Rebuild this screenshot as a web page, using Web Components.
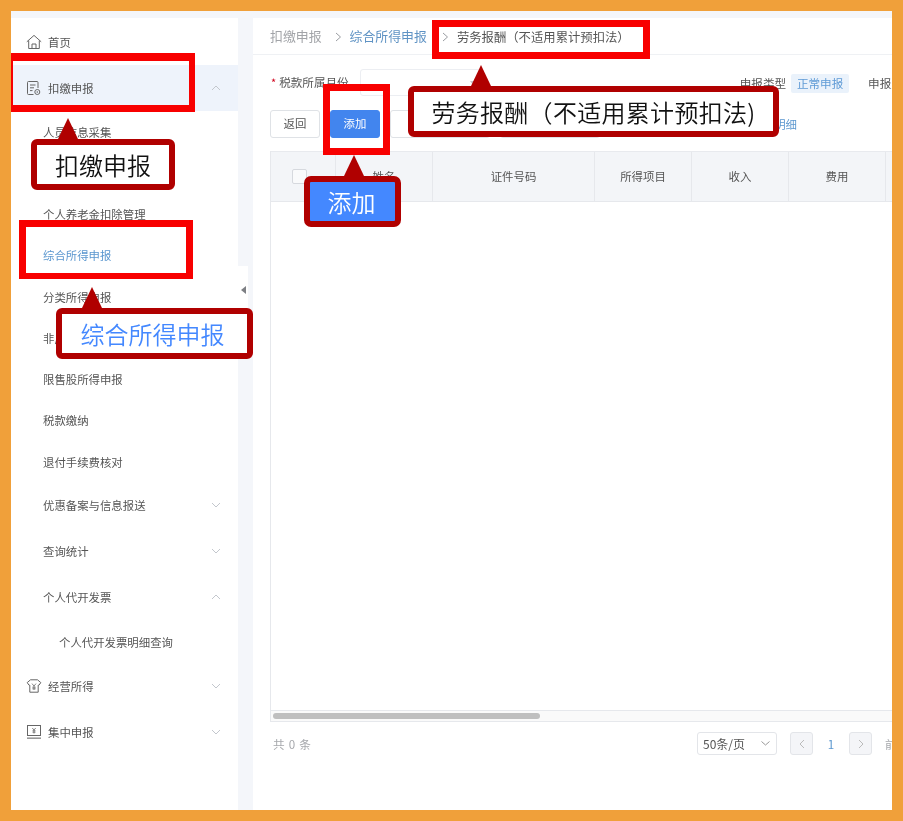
<!DOCTYPE html>
<html lang="zh-CN">
<head>
<meta charset="utf-8">
<title>劳务报酬</title>
<style>
html,body{margin:0;padding:0;background:#f0a03a;}
body{width:903px;height:821px;overflow:hidden;font-family:"Noto Sans CJK SC","Liberation Sans",sans-serif;}
</style>
</head>
<body>
<x-frame>
  <x-sidebar slot="side">
    <x-nav label="首页" icon="home" h="46"></x-nav>
    <x-nav label="扣缴申报" icon="doc" chev="up" h="46" current></x-nav>
    <x-nav label="人员信息采集" sub></x-nav>
    <x-nav label="专项附加扣除信息采集" sub></x-nav>
    <x-nav label="个人养老金扣除管理" sub></x-nav>
    <x-nav label="综合所得申报" sub active></x-nav>
    <x-nav label="分类所得申报" sub></x-nav>
    <x-nav label="非居民所得申报" sub></x-nav>
    <x-nav label="限售股所得申报" sub></x-nav>
    <x-nav label="税款缴纳" sub></x-nav>
    <x-nav label="退付手续费核对" sub></x-nav>
    <x-nav label="优惠备案与信息报送" sub chev="down" h="46"></x-nav>
    <x-nav label="查询统计" sub chev="down" h="46"></x-nav>
    <x-nav label="个人代开发票" sub chev="up" h="46"></x-nav>
    <x-nav label="个人代开发票明细查询" deep h="43"></x-nav>
    <x-nav label="经营所得" icon="shirt" chev="down" h="46"></x-nav>
    <x-nav label="集中申报" icon="screen" chev="down" h="46"></x-nav>
  </x-sidebar>
  <x-main slot="main">
    <x-crumbs></x-crumbs>
    <x-filter></x-filter>
    <x-actions></x-actions>
    <x-grid></x-grid>
    <x-pager></x-pager>
  </x-main>
  <x-mark slot="over" style="left:11px;top:53px;width:184px;height:59px;border-width:8px 6px 7px 2px"></x-mark>
  <x-mark slot="over" style="left:19px;top:220px;width:174px;height:59px;border-width:7px 7px 6px 7px"></x-mark>
  <x-mark slot="over" style="left:323px;top:84px;width:67px;height:71px;border-width:7px 7px 7px 7px"></x-mark>
  <x-mark slot="over" style="left:432px;top:20px;width:218px;height:39px;border-width:7px 7px 7px 7px"></x-mark>
  <x-tip slot="over" tip="21" style="left:31px;top:139px;width:144px;height:51px">扣缴申报</x-tip>
  <x-tip slot="over" tip="20" tone="link" style="left:56px;top:308px;width:197px;height:51px;padding-right:4px">综合所得申报</x-tip>
  <x-tip slot="over" tip="57" wide style="left:408px;top:86px;width:371px;height:51px">劳务报酬（不适用累计预扣法)</x-tip>
  <x-tip slot="over" tip="34" tone="fill" style="left:304px;top:176px;width:97px;height:51px;padding-right:2px">添加</x-tip>
</x-frame>

<script>
const ICONS={
 home:'<svg width="16" height="16" viewBox="0 0 16 16" fill="none" stroke="#666" stroke-width="1"><path d="M.8 7.800 8 1.400l7.200 6.400"/><path d="M2.700 6.500v8h10.600v-8"/><path d="M6 14.500v-4.500h4v4.500"/></svg>',
 doc:'<svg width="16" height="16" viewBox="0 0 16 16" fill="none" stroke="#666" stroke-width="1"><path d="M7.500 14.500H2.500a1 1 0 0 1-1-1V2.500a1 1 0 0 1 1-1h8.500a1 1 0 0 1 1 1V8"/><path d="M4 5h5.500M4 7.800h4M4 10.600h2.500"/><circle cx="11.300" cy="12" r="2.500"/><circle cx="11.300" cy="12" r=".8" fill="#666" stroke="none"/></svg>',
 shirt:'<svg width="16" height="16" viewBox="0 0 16 16" fill="none" stroke="#666" stroke-width="1"><path d="M4.500 1.800h7l3.300 2.800-1.800 2.600h-.8v7H3.800v-7H3L1.200 4.600z"/><path d="M6 5.600l2 2.400 2-2.400M8 8v4M6.300 9.200h3.400M6.300 10.800h3.400" stroke-width=".8"/></svg>',
 screen:'<svg width="16" height="16" viewBox="0 0 16 16" fill="none" stroke="#666" stroke-width="1"><rect x="1.500" y="1.500" width="13" height="10"/><path d="M1 14.200h14" stroke-width="1.600" stroke="#999"/><path d="M6.300 4l1.700 2 1.700-2M8 6v3.500M6.500 6.800h3M6.500 8.200h3" stroke-width=".8"/></svg>'
};
const CHEV={
 up:'<svg width="10" height="6" viewBox="0 0 10 6" fill="none" stroke="#c3c7cd" stroke-width="1"><path d="M1 5 5 1l4 4"/></svg>',
 down:'<svg width="10" height="6" viewBox="0 0 10 6" fill="none" stroke="#c3c7cd" stroke-width="1"><path d="M1 1l4 4 4-4"/></svg>'
};
function def(name,css,html,setup){
  customElements.define(name,class extends HTMLElement{
    constructor(){super();const r=this.attachShadow({mode:'open'});r.innerHTML='<style>'+css+'</style>'+html;}
    connectedCallback(){if(setup)setup.call(this,this.shadowRoot);}
  });
}

def('x-frame',`
  :host{display:block;width:903px;height:821px;box-sizing:border-box;padding:11px;position:relative;color:#555}
  .page{width:881px;height:799px;background:#f4f6fa;display:flex;align-items:stretch;padding-top:7px;box-sizing:border-box;overflow:hidden;filter:blur(.35px)}
  .gap{width:15px;flex:none;position:relative}
  .tab{position:absolute;left:0;top:248px;width:10px;height:92px;background:#fff;display:flex;align-items:flex-start;justify-content:flex-end;padding-top:20px;box-sizing:border-box;padding-right:2px}
  .tab i{width:0;height:0;border:4px solid transparent;border-right:5px solid #7d7f84;border-left:0}
  .side{flex:none;width:227px;display:block}
  .main{flex:1;min-width:0;display:block}
`,`<div class="page">
    <div class="side"><slot name="side"></slot></div>
    <div class="gap"><div class="tab"><i></i></div></div>
    <div class="main"><slot name="main"></slot></div>
  </div><slot name="over"></slot>`);

def('x-sidebar',`:host{display:block;height:792px;background:#fff;padding-top:1px;box-sizing:border-box}`,`<slot></slot>`);

def('x-nav',`
  :host{display:flex;align-items:center;box-sizing:border-box;height:41.25px;font-size:11.4px;color:#555;white-space:nowrap;padding-left:32px;padding-right:17px}
  :host([sub]){padding-left:32px}
  :host([deep]){padding-left:48px}
  :host([icon]){padding-left:15px}
  :host([current]){background:#eef3fb}
  :host([active]){color:#5b97cf}
  .ic{display:flex;width:16px;height:16px;margin-right:6px;flex:none}
  .ic:empty{display:none}
  .t{flex:1}
  .c{display:flex;flex:none}
`,`<span class="ic"></span><span class="t"></span><span class="c"></span>`,function(r){
  r.querySelector('.t').textContent=this.getAttribute('label');
  const h=this.getAttribute('h'); if(h)this.style.height=h+'px';
  const i=this.getAttribute('icon'); if(i)r.querySelector('.ic').innerHTML=ICONS[i];
  const c=this.getAttribute('chev'); if(c)r.querySelector('.c').innerHTML=CHEV[c];
});

def('x-main',`:host{display:block;height:792px;background:#fff;overflow:hidden;box-sizing:border-box}`,`<slot></slot>`);

def('x-crumbs',`
  :host{display:flex;align-items:center;height:37px;box-sizing:border-box;border-bottom:1.5px solid #eff1f4;padding-left:17px;font-size:12.9px;white-space:nowrap;color:#a2a4a8}
  .a{position:relative;top:-1px}
  .s{width:28px;display:flex;justify-content:center;flex:none;padding-left:5px;box-sizing:border-box;position:relative;top:1px}
  .s2{width:30px;padding-left:7px}
  .l{color:#5f93c4;position:relative;top:-1px}
  .c{color:#555;font-size:12.35px;position:relative;top:1px}
`,`<span class="a">扣缴申报</span><span class="s"><svg width="7" height="10" viewBox="0 0 7 10" fill="none" stroke="#9a9da2"><path d="M1 1l4.500 4L1 9"/></svg></span><span class="l">综合所得申报</span><span class="s s2"><svg width="7" height="10" viewBox="0 0 7 10" fill="none" stroke="#9a9da2"><path d="M1 1l4.500 4L1 9"/></svg></span><span class="c">劳务报酬（不适用累计预扣法）</span>`);

def('x-filter',`
  :host{display:flex;align-items:center;height:55px;box-sizing:border-box;padding-left:18px;font-size:11.6px;white-space:nowrap;color:#555;padding-top:1px}
  .r{color:#d0021b;margin-right:3px;font-size:11px;position:relative;top:-1px}
  .lab{position:relative;top:-1px}
  .in{width:124px;height:27px;box-sizing:border-box;border:1px solid #eceef2;border-radius:3px;margin-left:11px;margin-top:-1px;flex:none;display:flex;align-items:center;justify-content:flex-end;padding-right:7px}
  .in i{width:0;height:0;border:3px solid transparent;border-top:4px solid #c8cacf;margin-top:3px}
  .t1{margin-left:256px}
  .tag{margin-left:5px;width:58px;height:19px;background:#eaf2fb;color:#5f9bd6;display:flex;align-items:center;justify-content:center;border-radius:2px;flex:none}
  .t2{margin-left:19px}
`,`<span class="r">*</span><span class="lab">税款所属月份</span><span class="in"><i></i></span><span class="t1">申报类型</span><span class="tag">正常申报</span><span class="t2">申报类型</span>`);

def('x-actions',`
  :host{display:flex;align-items:center;height:28px;padding-left:17px;font-size:11.4px;white-space:nowrap;gap:10px;position:relative}
  .b{width:50px;height:28px;box-sizing:border-box;border:1px solid #dfe2e6;border-radius:3px;background:#fff;color:#555;display:flex;align-items:center;justify-content:center;flex:none;padding-bottom:2px}
  .p{background:#4285ee;border-color:#4285ee;color:#fff}
  .w{width:100px}
  .link{margin-left:auto;margin-right:95px;color:#5b97cf}
`,`<span class="b">返回</span><span class="b p">添加</span><span class="b w">导入</span><span class="b w">导出</span><span class="link">查看明细</span>`);

def('x-grid',`
  :host{display:block;margin:13px 0 0 17px;width:640px;height:571px;box-sizing:border-box;border-left:1px solid #e6e8ec;border-bottom:1px solid #e6e8ec;font-size:11.4px;color:#555;white-space:nowrap;overflow:hidden}
  .h{display:grid;grid-template-columns:65px 97px 162px 97px 97px 97px 97px;height:51px;background:#f3f5f8;border-top:1px solid #e8eaee;border-bottom:1px solid #e6e8ec;box-sizing:border-box}
  .h>span{display:flex;align-items:center;justify-content:center;border-right:1px solid #e6e8ec;padding-bottom:2px}
  .cb{width:13px;height:13px;border:1px solid #d6d9de;border-radius:2px;background:#f9fafb;position:relative;left:-4px;top:1px}
  .body{height:509px;border-bottom:1px solid #e6e8ec;box-sizing:border-box}
  .bar{height:10px;background:#fafafa;padding:2px;box-sizing:border-box;display:flex}
  .bar i{display:block;width:267px;height:6px;background:#bfbfbf;border-radius:3px}
`,`<div class="h"><span><i class="cb"></i></span><span>姓名</span><span>证件号码</span><span>所得项目</span><span>收入</span><span>费用</span><span></span></div><div class="body"></div><div class="bar"><i></i></div>`);

def('x-pager',`
  :host{display:flex;align-items:center;height:23px;margin-top:10px;padding-left:20px;font-size:11.6px;white-space:nowrap;color:#a6a8ac;position:relative}
  .tot{word-spacing:1.5px}
  .sel{margin-left:auto;width:80px;height:23px;box-sizing:border-box;border:1px solid #e3e5e9;border-radius:3px;color:#555;display:flex;align-items:center;justify-content:space-between;padding:0 6px 1px 5px;flex:none;font-size:12px}
  .n{width:23px;height:23px;box-sizing:border-box;border:1px solid #e3e5e9;border-radius:3px;background:#f4f5f8;display:flex;align-items:center;justify-content:center;flex:none}
  .prev{margin-left:13px}
  .one{width:36px;text-align:center;color:#5b97cf;flex:none}
  .go{margin-left:13px;margin-right:-22px;width:29px;flex:none}
`,`<span class="tot">共 0 条</span><span class="sel"><span>50条/页</span><svg width="9" height="5" viewBox="0 0 9 5" fill="none" stroke="#999"><path d="M.5.5l4 3.500 4-3.500"/></svg></span><span class="n prev"><svg width="6" height="10" viewBox="0 0 6 10" fill="none" stroke="#bbb"><path d="M5 1 1 5l4 4"/></svg></span><span class="one">1</span><span class="n"><svg width="6" height="10" viewBox="0 0 6 10" fill="none" stroke="#bbb"><path d="M1 1l4 4-4 4"/></svg></span><span class="go">前往</span>`);

def('x-mark',`:host{position:absolute;display:block;box-sizing:border-box;border:7px solid #f80000;background:transparent;filter:blur(.3px)}`,``);

def('x-tip',`
  :host{position:absolute;display:flex;align-items:center;justify-content:center;box-sizing:border-box;border:6px solid #b00000;border-radius:6px;background:#fff;color:#111;font-size:24px;font-weight:350;line-height:1;white-space:nowrap;font-family:"Noto Sans CJK SC","Liberation Sans",sans-serif;filter:blur(.3px)}
  :host([tone="link"]){color:#4488ff}
  :host([tone="fill"]){background:#4488ff;color:#fff;border-radius:7px}
  :host([wide]){letter-spacing:.3px}
  svg{position:absolute;top:-27px;display:block}
`,`<svg width="20" height="21" viewBox="0 0 20 21"><path d="M10 0 20 21H0z" fill="#b00000"/></svg><slot></slot>`,function(r){
  r.querySelector('svg').style.left=this.getAttribute('tip')+'px';
});
</script>
</body>
</html>
